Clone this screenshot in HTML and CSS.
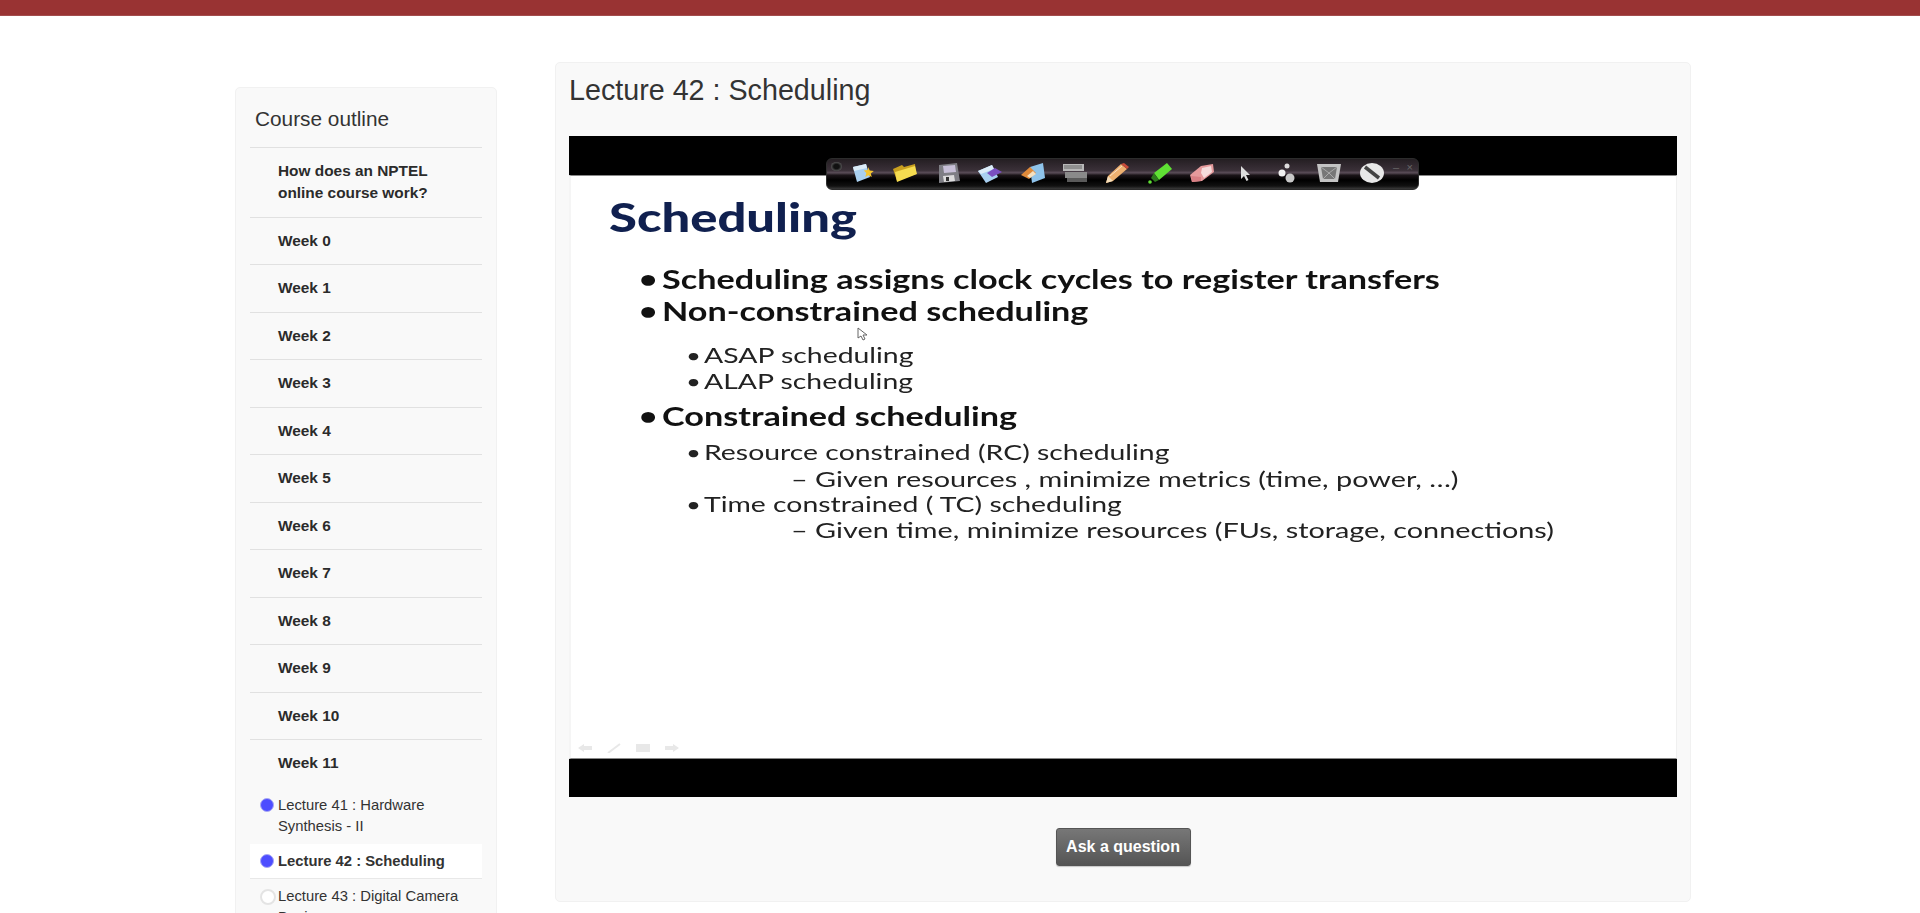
FILE: index.html
```html
<!DOCTYPE html>
<html lang="en">
<head>
<meta charset="utf-8">
<title>Lecture 42 : Scheduling</title>
<link rel="stylesheet" href="styles.css">
</head>
<body>
<header class="topbar"></header>
<div class="page">
  <aside class="outline">
    <h2 class="outline-title">Course outline</h2>
    <ul class="weeks">
      <li class="week">How does an NPTEL online course work?</li>
      <li class="week">Week 0</li>
      <li class="week">Week 1</li>
      <li class="week">Week 2</li>
      <li class="week">Week 3</li>
      <li class="week">Week 4</li>
      <li class="week">Week 5</li>
      <li class="week">Week 6</li>
      <li class="week">Week 7</li>
      <li class="week">Week 8</li>
      <li class="week">Week 9</li>
      <li class="week">Week 10</li>
      <li class="week week-open">Week 11</li>
    </ul>
    <ul class="lectures">
      <li class="lecture done">Lecture 41 : Hardware Synthesis - II</li>
      <li class="lecture done current">Lecture 42 : Scheduling</li>
      <li class="lecture">Lecture 43 : Digital Camera Design</li>
    </ul>
  </aside>
  <main class="panel">
    <h1 class="lecture-title">Lecture 42 : Scheduling</h1>
    <div class="video">
      <div class="slide">
        <div class="slide-heading">Scheduling</div>
        <div class="ln ln-b mt-26"><span class="dot">•</span>Scheduling assigns clock cycles to register transfers</div>
        <div class="ln ln-b mt-8"><span class="dot">•</span>Non-constrained scheduling</div>
        <div class="ln ln-s mt-20"><span class="dot">•</span>ASAP scheduling</div>
        <div class="ln ln-s mt-2"><span class="dot">•</span>ALAP scheduling</div>
        <div class="ln ln-b mt-11"><span class="dot">•</span>Constrained scheduling</div>
        <div class="ln ln-s mt-12"><span class="dot">•</span>Resource constrained (RC) scheduling</div>
        <div class="ln ln-d mt-3">– Given resources , minimize metrics (time, power, …)</div>
        <div class="ln ln-s mt-1"><span class="dot">•</span>Time constrained ( TC) scheduling</div>
        <div class="ln ln-d mt-2">– Given time, minimize resources (FUs, storage, connections)</div>
        <svg class="cursor" width="12" height="14" viewBox="0 0 12 14"><path d="M1 1v10l3-2 2 4 2-1-2-4h4z" fill="#fff" stroke="#666"/></svg>
        <div class="slide-nav">
          <svg width="16" height="10" viewBox="0 0 16 10"><path d="M1 5l6-4v2h8v4H7v2z" fill="#e8e8e8"/></svg>
          <svg width="16" height="10" viewBox="0 0 16 10"><path d="M2 10L14 1" stroke="#e8e8e8" stroke-width="2"/></svg>
          <svg width="16" height="10" viewBox="0 0 16 10"><rect x="1" y="1" width="14" height="8" fill="#e8e8e8"/></svg>
          <svg width="16" height="10" viewBox="0 0 16 10"><path d="M15 5L9 1v2H1v4h8v2z" fill="#e8e8e8"/></svg>
        </div>
      </div>
      <div class="toolbar">
        <span class="knob"></span>
        <svg class="tool" viewBox="0 0 26 22"><path d="M3 5l13-3 4 13-13 5z" fill="#a9d0f0"/><path d="M3 5l13-3 1 4-13 3z" fill="#dcecf8"/><path d="M18 5l1.800 3.500 4 .5-3 2.500 1 3.500-3.500-1.800-3 1.800 1-4-2.500-2.500 4-.5z" fill="#f4c430"/></svg>
        <svg class="tool" viewBox="0 0 26 22"><path d="M1 7l9-4 2 2 11-3 1 10-19 7z" fill="#c9a020"/><path d="M3 10l20-6 2 8-20 8z" fill="#f6dc50"/></svg>
        <svg class="tool" viewBox="0 0 26 22"><path d="M4 3l18-2 3 18-21 2z" fill="#7e7e84"/><path d="M8 4l12-1 1 7-12 1z" fill="#c8c0d8"/><path d="M8 14l11-1 1 6-11 1z" fill="#dcdcdc"/><rect x="11" y="15" width="3" height="4" fill="#333"/></svg>
        <svg class="tool" viewBox="0 0 26 22"><path d="M1 9l14-6 6 12-12 6z" fill="#a9d0f0"/><path d="M1 9l14-6 2 4-13 5z" fill="#dcecf8"/><path d="M10 11l8-5 7 4-10 5z" fill="#7a4fc0"/></svg>
        <svg class="tool" viewBox="0 0 26 22"><path d="M10 5l13-4 2 15-13 5z" fill="#8fc3ea"/><path d="M1 13l9-8 6 6-7 6z" fill="#e08a3a"/><path d="M7 14l6-5 3 3-6 4z" fill="#f5e0c0"/></svg>
        <svg class="tool" viewBox="0 0 26 22"><rect x="1" y="2" width="21" height="7" fill="#b8b8b8"/><path d="M2 4h18M2 6h18" stroke="#666"/><rect x="3" y="10" width="22" height="6" fill="#8a8a8a"/><rect x="5" y="16" width="20" height="4" fill="#5a5a5a"/></svg>
        <svg class="tool" viewBox="0 0 26 22"><path d="M2 21l2-7L17 2l6 5L9 19z" fill="#eeb070"/><path d="M17 2l6 5 2-2-5-4z" fill="#c94b3a"/><path d="M2 21l2-7 5 5z" fill="#f5ddb8"/><path d="M6 14L18 4" stroke="#fae2c8"/></svg>
        <svg class="tool" viewBox="0 0 26 22"><path d="M7 11L20 1l5 6-13 11z" fill="#5fe034"/><path d="M7 11l5 7-4 2-4-4z" fill="#2d7a1c"/><circle cx="3" cy="20" r="1.800" fill="#5fe034"/></svg>
        <svg class="tool" viewBox="0 0 26 22"><path d="M1 13L12 4l12-2 1 8-12 9-10 1z" fill="#e59a9c"/><path d="M13 6l9-2 1 6-8 6-3-5z" fill="#f5dcdc"/><path d="M2 14l10 1v4l-9 1z" fill="#d87f84"/></svg>
        <svg class="tool" viewBox="0 0 26 22"><path d="M9 4v13l3-3 2.500 5 2-1-2.500-5h4z" fill="#ddd"/></svg>
        <svg class="tool" viewBox="0 0 26 22"><circle cx="13" cy="4" r="2.500" fill="#ddd"/><circle cx="8" cy="11" r="3.500" fill="#f0f0f0"/><circle cx="16" cy="16" r="4.500" fill="#c8c8c8"/></svg>
        <svg class="tool" viewBox="0 0 26 22"><path d="M1 2h24l-3 18H4z" fill="#c4c4c4"/><path d="M5 5h16l-2 12H7z" fill="#777"/><path d="M5 5l8 6 8-6M7 17l6-6 6 6" stroke="#aaa" fill="none"/></svg>
        <svg class="tool" viewBox="0 0 26 22"><ellipse cx="13" cy="11" rx="12" ry="10" fill="#e8e8e8"/><path d="M6 5l14 11" stroke="#444" stroke-width="3.500"/></svg>
        <span class="win-btn">–</span>
        <span class="win-btn win-close">×</span>
      </div>
    </div>
    <div class="actions"><button class="ask">Ask a question</button></div>
  </main>
</div>
</body>
</html>
```
FILE: styles.css
```css
* { box-sizing: border-box; }
html, body { margin: 0; height: 913px; overflow: hidden; background: #fff; }
body { font-family: "Liberation Sans", Arial, sans-serif; color: #333; font-size: 14px; }
.topbar { height: 16px; background: #993333; border-bottom: 1px solid #a34d4d; }
.page { display: flex; align-items: flex-start; padding-left: 235px; }
.outline { width: 262px; margin-top: 71px; padding: 0 14px; background: #f9f9f9; border: 1px solid #f1f1f1; border-radius: 5px; }
.outline-title { margin: 0; padding: 0 5px; height: 59px; line-height: 62px; font-size: 20.800px; font-weight: 400; }
.weeks, .lectures { list-style: none; margin: 0; padding: 0; }
.week { padding: 12.250px 20px 12.250px 28px; line-height: 22px; font-weight: 700; border-top: 1px solid #e1e1e1; font-size: 15.400px; color: #2b2b2b; }
.lectures { padding-top: 1px; }
.lecture { position: relative; padding: 7px 20px 7px 28px; line-height: 21px; font-size: 14.800px; }
.lecture::before { content: ""; position: absolute; left: 10px; top: 10px; width: 12px; height: 12px; border-radius: 50%; background: #fff; border: 2px solid #e4e4e4; }
.lecture.done::before { background: #4d4dff; border: 1px solid #a8a8f5; }
.lecture.current { background: #fff; font-weight: 700; border-bottom: 1px solid #e8e8e8; padding-bottom: 6px; }
.panel { width: 1136px; height: 840px; margin: 46px 0 0 58px; padding: 0 13px; background: #f9f9f9; border: 1px solid #f1f1f1; border-radius: 5px; }
.lecture-title { margin: 0; height: 73px; line-height: 55px; font-size: 28.700px; font-weight: 400; }
.video { position: relative; height: 661px; width: 1108px; background: #000; padding-top: 39px; }
.slide { position: relative; height: 584px; background: #fff; border-top: 1px solid #888; border-left: 2px solid #f5f5f5; border-right: 1px solid #f0f0f0; border-bottom: 1px solid #888; padding-top: 15px; overflow: hidden; }
.slide-heading { height: 50px; line-height: 52px; margin-left: 38px; font-family: Lato, sans-serif; font-weight: 900; font-size: 40px; color: #10204f; transform: scaleX(1.268); transform-origin: 0 0; filter: blur(.4px); }
.ln { height: 24px; line-height: 24px; font-family: Lato, sans-serif; color: #111; white-space: nowrap; transform: scaleX(1.315); transform-origin: 0 0; position: relative; filter: blur(.4px); }
.ln-b { margin-left: 91px; font-weight: 700; font-size: 26px; }
.ln-s { margin-left: 133px; font-size: 22px; color: #222; transform: scaleX(1.29); }
.ln-d { margin-left: 220px; font-size: 22px; color: #222; transform: scaleX(1.31); }
.dot { position: absolute; left: -17.500px; font-size: 24px; }
.ln-s .dot { left: -14px; font-size: 20px; }
.mt-1 { margin-top: 1px; }
.mt-2 { margin-top: 2px; }
.mt-3 { margin-top: 3px; }
.mt-8 { margin-top: 8px; }
.mt-11 { margin-top: 11px; }
.mt-12 { margin-top: 12px; }
.mt-20 { margin-top: 20px; }
.mt-26 { margin-top: 26px; }
.cursor { position: absolute; left: 286px; top: 151px; }
.slide-nav { position: absolute; left: 6px; bottom: 5px; display: flex; gap: 13px; }
.toolbar { position: absolute; left: 257px; top: 22px; width: 593px; height: 32px; padding: 3px 0 0 23px; display: flex; gap: 16.400px; align-items: flex-start; border-radius: 6px; background: linear-gradient(#241e22, #3a3038 38%, #5a4d58 46%, #1a1418 54%, #000 70%, #111 90%, #3a3a3a); border: 1px solid #2c2c2c; }
.tool { width: 26px; height: 22px; flex: none; filter: blur(.5px); }
.knob { position: absolute; left: 4px; top: 3px; width: 11px; height: 9px; border-radius: 50%; background: radial-gradient(#111 35%, #777 90%); }
.win-btn { position: absolute; top: 1px; right: 19px; font-size: 11px; line-height: 14px; color: #666; }
.win-close { right: 5px; }
.actions { display: flex; justify-content: center; padding-top: 31px; }
.ask { width: 135px; height: 38px; border: 1px solid #555; border-radius: 3px; background: linear-gradient(#777, #555); color: #fff; font: 700 16px "Liberation Sans", Arial, sans-serif; padding: 0; box-shadow: 0 1px 1px rgba(0,0,0,.2); }
```
